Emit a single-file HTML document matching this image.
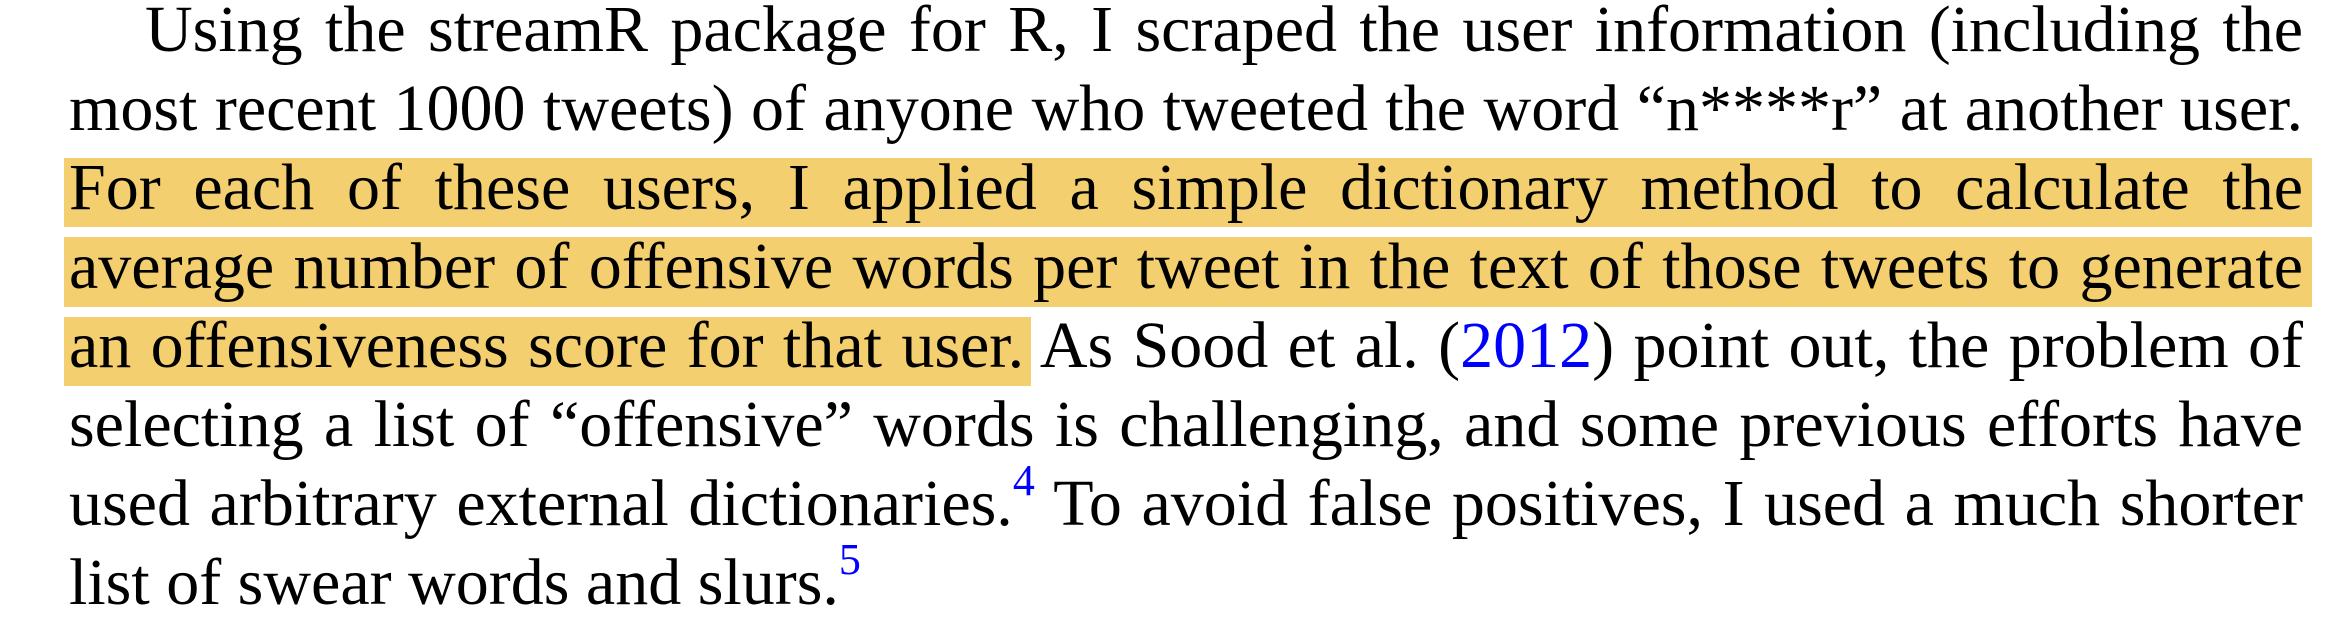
<!DOCTYPE html>
<html><head><meta charset="utf-8"><style>
html,body{margin:0;padding:0;background:#fff;}
body{width:2340px;height:622px;position:relative;overflow:hidden;font-family:"Liberation Serif","Times New Roman",Times,serif;font-size:66px;color:#000;}
.l{position:absolute;left:69px;width:2234px;line-height:79px;height:79px;white-space:nowrap;text-align:justify;text-align-last:justify;}
.hl{position:absolute;background:#F3CF6F;}
.b{color:#0000ff;}
sup{color:#0000ff;font-size:44px;vertical-align:0;position:relative;top:-30px;line-height:0;}
</style></head><body>
<div class="hl" style="left:64px;top:158px;width:2248px;height:69px"></div>
<div class="hl" style="left:64px;top:237px;width:2248px;height:70px"></div>
<div class="hl" style="left:64px;top:317px;width:967px;height:69px"></div>
<div class="l" style="top:-10px;left:145px;width:2158px">Using the streamR package for R, I scraped the user information (including the</div>
<div class="l" style="top:69px">most recent 1000 tweets) of anyone who tweeted the word “n****r” at another user.</div>
<div class="l" style="top:148px">For each of these users, I applied a simple dictionary method to calculate the</div>
<div class="l" style="top:227px">average number of offensive words per tweet in the text of those tweets to generate</div>
<div class="l" style="top:306px">an offensiveness score for that user. As Sood et al. (<span class="b">2012</span>) point out, the problem of</div>
<div class="l" style="top:385px">selecting a list of “offensive” words is challenging, and some previous efforts have</div>
<div class="l" style="top:464px">used arbitrary external dictionaries.<sup>4</sup> To avoid false positives, I used a much shorter</div>
<div class="l" style="top:543px;text-align:left;text-align-last:left">list of swear words and slurs.<sup>5</sup></div>
</body></html>
